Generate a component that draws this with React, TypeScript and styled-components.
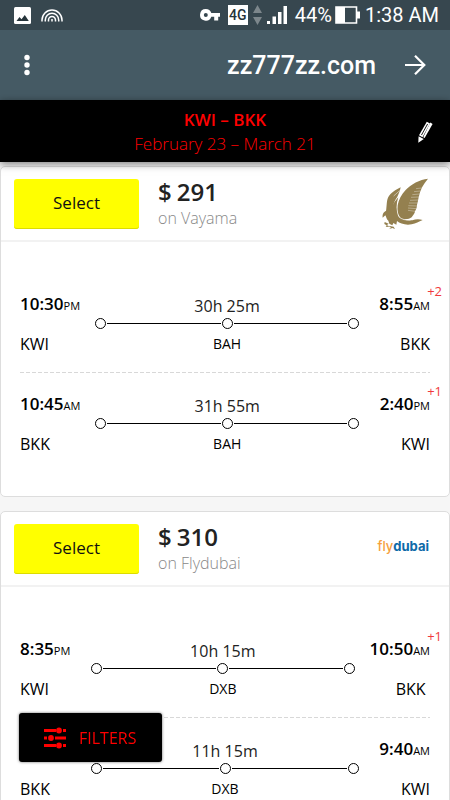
import React from "react";
import styled, { createGlobalStyle } from "styled-components";

const GlobalStyle = createGlobalStyle`
  *, *::before, *::after { box-sizing: border-box; }
  body {
    margin: 0;
    background: #f6f6f6;
    color: #000;
    font-family: "Open Sans", "Noto Sans", sans-serif;
  }
  button { font: inherit; border: 0; padding: 0; cursor: pointer; }
`;

const Screen = styled.div`
  display: flex;
  flex-direction: column;
  height: 100vh;
`;

const StatusBar = styled.div`
  display: flex;
  flex: none;
  align-items: center;
  justify-content: space-between;
  height: 30px;
  padding: 0 11px 0 14px;
  background: #37474f;
  color: #fff;
  font: 400 20px/30px Roboto, sans-serif;
`;

const StatusGroup = styled.div<{ $gap: number }>`
  display: flex;
  align-items: center;
  gap: ${(p) => p.$gap}px;
`;

const NetworkBadge = styled.span`
  width: 20px;
  height: 20px;
  background: #fff;
  color: #26343b;
  font: 500 14px/20px Roboto, sans-serif;
  text-align: center;
`;

const Charge = styled.span`
  display: flex;
  align-items: center;
  gap: 3px;
`;

const AddressBar = styled.header`
  display: flex;
  flex: none;
  align-items: center;
  height: 70px;
  padding: 0 23px 0 15px;
  background: #455a64;
  color: #fff;
`;

const BarButton = styled.button`
  display: flex;
  align-items: center;
  justify-content: center;
  width: 24px;
  height: 40px;
  background: none;
  color: inherit;
`;

const Address = styled.div`
  flex: 1;
  padding: 2px 27px 0 0;
  text-align: right;
  font: 500 25px/32px Roboto, sans-serif;
`;

const TripBar = styled.div`
  position: relative;
  z-index: 1;
  flex: none;
  padding: 8px 48px 6px;
  background: #000;
  color: #f00;
  text-align: center;
  box-shadow: 0 2px 8px rgba(0, 0, 0, 0.5);
`;

const TripLine = styled.div<{ $strong?: boolean }>`
  font-size: 17px;
  line-height: 24px;
  font-weight: ${(p) => (p.$strong ? 600 : 300)};
`;

const EditButton = styled(BarButton)`
  position: absolute;
  top: 12px;
  right: 13px;
  color: #fff;
`;

const Results = styled.main`
  display: flex;
  flex: 1;
  flex-direction: column;
  gap: 14px;
  min-height: 0;
  padding: 4px 0 14px;
  overflow-y: auto;
  scrollbar-width: none;
`;

const Card = styled.article`
  flex: none;
  border: 1px solid #ddd;
  border-radius: 5px;
  background: #fff;
`;

const CardHeader = styled.div`
  display: flex;
  align-items: center;
  height: 75px;
  padding: 0 20px 0 13px;
  border-bottom: 2px solid #f2f2f2;
`;

const SelectButton = styled.button`
  flex: none;
  width: 125px;
  height: 50px;
  padding-bottom: 2px;
  border-radius: 3px;
  background: #ff0;
  box-shadow: inset 0 -1px 0 #dcdc00;
  color: #111;
  font-size: 17px;
`;

const Offer = styled.div`
  flex: 1;
  margin-left: 19px;
`;

const Price = styled.div`
  display: flex;
  gap: 5px;
  color: #222;
  font-size: 24px;
  line-height: 28px;
  font-weight: 600;
`;

const Seller = styled.div`
  color: #888;
  font-size: 16px;
  line-height: 24px;
  font-weight: 300;
`;

const Legs = styled.div`
  padding: 30px 19px 24px;
`;

const Leg = styled.section`
  display: flex;
  height: 100px;
  padding-top: 20px;

  & + & {
    background: repeating-linear-gradient(90deg, #d8d8d8 0 4px, transparent 4px 6px) top / 100% 1px no-repeat;
  }
`;

const Stop = styled.div<{ $end?: boolean }>`
  position: relative;
  flex: none;
  min-width: 56px;
  text-align: ${(p) => (p.$end ? "right" : "left")};
`;

const Clock = styled.div`
  height: 24px;
  font-size: 17px;
  line-height: 24px;
  font-weight: 600;
  white-space: nowrap;
`;

const Meridiem = styled.span`
  font-size: 11px;
  font-weight: 400;
`;

const Airport = styled.div`
  width: 56px;
  margin-top: 16px;
  font-size: 16px;
  line-height: 24px;
`;

const DayShift = styled.span`
  position: absolute;
  top: -11px;
  right: -12px;
  color: #f0393c;
  font-size: 13px;
  line-height: 20px;
`;

const Route = styled.div`
  flex: 1;
  margin: 2px 15px 0;
  text-align: center;
`;

const Duration = styled.div`
  font-size: 16px;
  line-height: 24px;
  color: #222;
`;

const Track = styled.div`
  display: flex;
  align-items: center;
  height: 11px;
`;

const Dot = styled.span`
  width: 11px;
  height: 11px;
  border: 1px solid #000;
  border-radius: 50%;
`;

const Line = styled.span`
  flex: 1;
  height: 1px;
  margin: 0 1px;
  background: #000;
`;

const Via = styled.div`
  margin-top: 5px;
  font-size: 14px;
  line-height: 20px;
`;

const FlyLogo = styled.span`
  padding-bottom: 6px;
  color: #0d6aa8;
  font: 700 13px/16px Inter, sans-serif;
`;

const LogoAccent = styled.span`
  color: #f6a03c;
  font-weight: 500;
`;

const FiltersButton = styled.button`
  position: fixed;
  left: 19px;
  bottom: 38px;
  z-index: 2;
  display: flex;
  align-items: center;
  gap: 12px;
  height: 49px;
  padding: 0 26px 0 24px;
  border-radius: 3px;
  background: #000;
  box-shadow: 0 0 3px rgba(0, 0, 0, 0.6);
  color: #f00;
  font-size: 16px;
`;

const PictureIcon = () => (
  <svg width="17" height="17" viewBox="0 0 17 17">
    <rect width="17" height="17" rx="1.5" fill="#fff" />
    <path d="M2.5 14l3-4 2 2.2L10.8 8l4 6z" fill="#26343b" />
  </svg>
);

const RainbowIcon = () => (
  <svg width="22" height="13" viewBox="0 0 22 13" fill="none" stroke="#fff" strokeWidth="1.5">
    <path d="M1 12.5V11a10 10 0 0 1 20 0v1.5M4.3 12.5V11a6.7 6.7 0 0 1 13.4 0v1.5M7.5 12.5V11a3.5 3.5 0 0 1 7 0v1.5M11 12.5V10" />
  </svg>
);

const KeyIcon = () => (
  <svg width="20" height="12" viewBox="0 0 20 12" fill="#fff" fillRule="evenodd">
    <path d="M5.8 0a5.8 5.8 0 1 0 5.5 7.8h2.9V11.5h4V7.8H20V4H11.3A5.8 5.8 0 0 0 5.8 0zM5.8 4a2 2 0 1 1 0 4 2 2 0 0 1 0-4z" />
  </svg>
);

const DataIcon = () => (
  <svg width="9" height="20" viewBox="0 0 9 20" fill="#7d878c">
    <path d="M4.5 0L9 8H0zM4.5 20L9 12H0z" />
  </svg>
);

const SignalIcon = () => (
  <svg width="20" height="18" viewBox="0 0 20 18" fill="#fff">
    <path d="M0 15h3v3H0zM5.5 10.5H9V18H5.5zM11 6h3.5v12H11zM16.5 0H20v18h-3.5z" />
  </svg>
);

const BatteryIcon = () => (
  <svg width="25" height="18" viewBox="0 0 25 18">
    <path d="M1 1h20.5v16H1z" fill="none" stroke="#fff" strokeWidth="1.6" />
    <path d="M1 1h9v16H1zM22 5.5h3v7h-3z" fill="#fff" />
  </svg>
);

const MoreIcon = () => (
  <svg width="6" height="22" viewBox="0 0 6 22" fill="#fff">
    <circle cx="3" cy="3.5" r="2.7" />
    <circle cx="3" cy="11" r="2.7" />
    <circle cx="3" cy="18.5" r="2.7" />
  </svg>
);

const ForwardIcon = () => (
  <svg width="22" height="22" viewBox="0 0 22 22" fill="none" stroke="#fff" strokeWidth="2.2">
    <path d="M1 11h19M11 1.7L20.3 11 11 20.3" />
  </svg>
);

const PencilIcon = () => (
  <svg width="16" height="22" viewBox="0 0 16 22" fill="#fff">
    <path d="M9.8 0.8L13 2.5 5.5 16.2 2 14.2z" />
    <path d="M13.3 1.5L15.6 3 7.6 17 6.2 16.3z" />
    <path d="M1.6 15.2L6.8 18.1 1.3 21.7z" />
    <path d="M10.6 3L4.5 14" stroke="#000" strokeWidth="0.9" />
  </svg>
);

const SlidersIcon = () => (
  <svg width="24" height="22" viewBox="0 0 24 22" fill="#f00">
    <path d="M1 2h12v3H1zM20 2h3v3h-3zM1 9.5h3v3H1zM12 9.5h11v3H12zM1 17h12v3H1zM20 17h3v3h-3z" />
    <circle cx="16" cy="3.5" r="2.9" />
    <circle cx="8" cy="11" r="2.9" />
    <circle cx="16" cy="18.5" r="2.9" />
  </svg>
);

const FalconLogo = () => (
  <svg width="47" height="52" viewBox="35 28 141 156" role="img" aria-label="Gulf Air">
    <g fill="#94804f">
      <path d="M173 30C148 33 122 46 106 64C93 77 85 93 82 110C80 126 83 139 90 147C101 155 116 152 124 146C128 140 134 134 134 128C139 120 140 114 140 108C143 100 143 94 145 86C149 64 159 46 173 30Z" />
      <path d="M91 56C76 63 61 73 54 85C48 97 50 110 47 128L64 134C66 113 71 98 81 84C86 74 89 67 91 56Z" />
      <path d="M84 86C71 100 65 112 60 130L84 144C77 126 77 106 84 86Z" />
      <path d="M37 147C35 134 44 124 57 126C69 128 76 136 83 142C94 152 110 157 126 155C136 151 147 151 157 154C145 158 137 165 124 167C105 170 89 165 80 157L78 168L69 163L66 170L57 165L54 156C48 152 48 145 45 140Z" />
      <path d="M43 160L55 165L50 169L57 175L46 174L49 170L42 166Z" />
      <path d="M54 171L70 174L74 181L66 178L55 182L62 177Z" />
    </g>
    <g fill="none" stroke="#fff" strokeWidth="1">
      <path d="M154 58L137 60M150 67L131 69M148 76L126 78M146 85L122 86M144 94L119 95M143 103L116 103M141 112L114 111M138 120L113 118M135 128L113 125" />
      <path d="M85 144C95 153 108 156 124 152" strokeWidth="2" />
      <path d="M88 66L70 82" strokeWidth="1.5" />
    </g>
  </svg>
);

const FlydubaiLogo = () => (
  <FlyLogo>
    <LogoAccent>fly</LogoAccent>dubai
  </FlyLogo>
);

type LegData = {
  depart?: [string, string];
  from: string;
  duration: string;
  via: string;
  arrive: [string, string];
  to: string;
  shift?: string;
};

type OfferData = { price: string; seller: string; logo: React.ReactNode; legs: LegData[] };

const offers: OfferData[] = [
  {
    price: "291",
    seller: "on Vayama",
    logo: <FalconLogo />,
    legs: [
      { depart: ["10:30", "PM"], from: "KWI", duration: "30h 25m", via: "BAH", arrive: ["8:55", "AM"], to: "BKK", shift: "+2" },
      { depart: ["10:45", "AM"], from: "BKK", duration: "31h 55m", via: "BAH", arrive: ["2:40", "PM"], to: "KWI", shift: "+1" },
    ],
  },
  {
    price: "310",
    seller: "on Flydubai",
    logo: <FlydubaiLogo />,
    legs: [
      { depart: ["8:35", "PM"], from: "KWI", duration: "10h 15m", via: "DXB", arrive: ["10:50", "AM"], to: "BKK", shift: "+1" },
      { from: "BKK", duration: "11h 15m", via: "DXB", arrive: ["9:40", "AM"], to: "KWI" },
    ],
  },
];

const Time = ({ value }: { value?: [string, string] }) => (
  <Clock>
    {value && (
      <>
        {value[0]}
        <Meridiem>{value[1]}</Meridiem>
      </>
    )}
  </Clock>
);

const LegRow = ({ leg }: { leg: LegData }) => (
  <Leg>
    <Stop>
      <Time value={leg.depart} />
      <Airport>{leg.from}</Airport>
    </Stop>
    <Route>
      <Duration>{leg.duration}</Duration>
      <Track>
        <Dot />
        <Line />
        <Dot />
        <Line />
        <Dot />
      </Track>
      <Via>{leg.via}</Via>
    </Route>
    <Stop $end>
      <Time value={leg.arrive} />
      <Airport>{leg.to}</Airport>
      {leg.shift && <DayShift>{leg.shift}</DayShift>}
    </Stop>
  </Leg>
);

export default function App() {
  return (
    <Screen>
      <GlobalStyle />
      <StatusBar>
        <StatusGroup $gap={10}>
          <PictureIcon />
          <RainbowIcon />
        </StatusGroup>
        <StatusGroup $gap={8}>
          <KeyIcon />
          <StatusGroup $gap={5}>
            <NetworkBadge>4G</NetworkBadge>
            <DataIcon />
            <SignalIcon />
          </StatusGroup>
          <StatusGroup $gap={5}>
            <Charge>
              44%
              <BatteryIcon />
            </Charge>
            <span>1:38 AM</span>
          </StatusGroup>
        </StatusGroup>
      </StatusBar>
      <AddressBar>
        <BarButton aria-label="Menu">
          <MoreIcon />
        </BarButton>
        <Address>zz777zz.com</Address>
        <BarButton aria-label="Forward">
          <ForwardIcon />
        </BarButton>
      </AddressBar>
      <TripBar>
        <TripLine $strong>KWI – BKK</TripLine>
        <TripLine>February 23 – March 21</TripLine>
        <EditButton aria-label="Edit search">
          <PencilIcon />
        </EditButton>
      </TripBar>
      <Results>
        {offers.map((offer) => (
          <Card key={offer.price}>
            <CardHeader>
              <SelectButton>Select</SelectButton>
              <Offer>
                <Price>
                  <span>$</span>
                  <span>{offer.price}</span>
                </Price>
                <Seller>{offer.seller}</Seller>
              </Offer>
              {offer.logo}
            </CardHeader>
            <Legs>
              {offer.legs.map((leg) => (
                <LegRow key={leg.from} leg={leg} />
              ))}
            </Legs>
          </Card>
        ))}
      </Results>
      <FiltersButton>
        <SlidersIcon />
        FILTERS
      </FiltersButton>
    </Screen>
  );
}
